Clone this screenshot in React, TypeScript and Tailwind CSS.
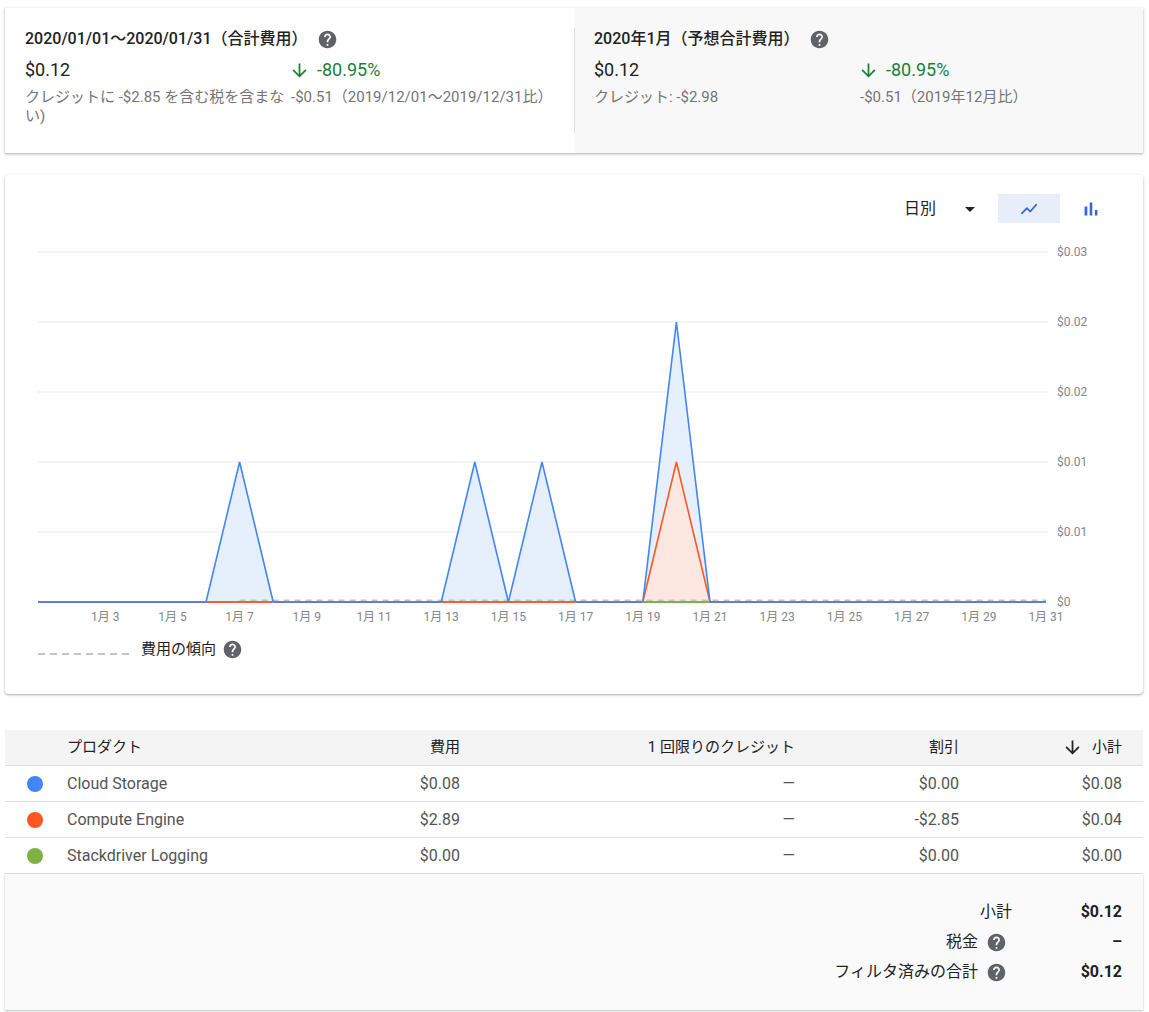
import React from "react";

const FONT = { fontFamily: "Roboto, 'Noto Sans CJK JP', sans-serif" };

function Help({ className = "" }: { className?: string }) {
  return (
    <svg viewBox="0 0 24 24" className={className} fill="#5f6368">
      <path d="M12 2C6.48 2 2 6.48 2 12s4.48 10 10 10 10-4.48 10-10S17.52 2 12 2zm1 17h-2v-2h2v2zm2.07-7.75l-.9.92C13.45 12.9 13 13.5 13 15h-2v-.5c0-1.1.45-2.1 1.17-2.83l1.24-1.26c.37-.36.59-.86.59-1.41 0-1.1-.9-2-2-2s-2 .9-2 2H8c0-2.21 1.79-4 4-4s4 1.79 4 4c0 .88-.36 1.68-.93 2.25z" />
    </svg>
  );
}

function ArrowDown({ className = "", color = "#188038" }: { className?: string; color?: string }) {
  return (
    <svg viewBox="0 0 24 24" className={className} fill={color}>
      <path d="M20 12l-1.41-1.41L13 16.17V4h-2v12.17l-5.58-5.59L4 12l8 8 8-8z" />
    </svg>
  );
}

function SummaryPanel({
  title,
  left,
  right,
  gray,
}: {
  title: string;
  left: React.ReactNode;
  right: string;
  gray?: boolean;
}) {
  return (
    <div className={`flex-1 ${gray ? "bg-[#f8f8f8] pl-[19px]" : "bg-white pl-[20px]"} pt-[20px]`}>
      <div className="flex items-center h-[22px] text-[16px] font-medium text-[#202124]">
        <span>{title}</span>
        <Help className="w-[21px] h-[21px] ml-[10px]" />
      </div>
      <div className="grid grid-cols-[266px_1fr] mt-[8px]">
        <div className="text-[18px] leading-[24px] text-[#202124]">$0.12</div>
        <div className="flex items-center text-[18px] leading-[24px] text-[#188038]">
          <ArrowDown className="w-[21px] h-[21px] -ml-[2px] mr-[7px]" />
          -80.95%
        </div>
        <div className="text-[15px] leading-[19px] text-[#757575] mt-[6px]">{left}</div>
        <div className="text-[15px] leading-[19px] text-[#757575] mt-[6px]">{right}</div>
      </div>
    </div>
  );
}

const dx = (d: number) => 33 + (d - 1) * 33.6;
const Y0 = 379;
const vy = (v: number) => Y0 - (v / 0.005) * 70;

function Chart() {
  const grid = [
    { y: 29, l: "$0.03" },
    { y: 99, l: "$0.02" },
    { y: 169, l: "$0.02" },
    { y: 239, l: "$0.01" },
    { y: 309, l: "$0.01" },
  ];
  const peaks = [
    [6, 7, 8, 0.01],
    [13, 14, 15, 0.01],
    [15, 16, 17, 0.01],
    [19, 20, 21, 0.02],
  ];
  const labels = [3, 5, 7, 9, 11, 13, 15, 17, 19, 21, 23, 25, 27, 29, 31];
  const blueBase = [
    [1, 6],
    [8, 13],
    [17, 19],
    [21, 31],
  ];
  const orangeBase = [
    [6, 8],
    [13, 17],
  ];
  return (
    <svg width="1138" height="410" className="block" style={FONT}>
      {grid.map((g, i) => (
        <g key={i}>
          <line x1={33} x2={1043} y1={g.y} y2={g.y} stroke="#ebebeb" strokeWidth={1.2} />
          <text x={1052} y={g.y + 4} fontSize={12} fill="#80868b">
            {g.l}
          </text>
        </g>
      ))}
      <text x={1052} y={Y0 + 4} fontSize={12} fill="#80868b">
        $0
      </text>
      {peaks.map((p, i) => (
        <polygon
          key={i}
          points={`${dx(p[0])},${Y0} ${dx(p[1])},${vy(p[3])} ${dx(p[2])},${Y0}`}
          fill="#e6effc"
        />
      ))}
      <polygon
        points={`${dx(19)},${Y0} ${dx(20)},${vy(0.01)} ${dx(21)},${Y0}`}
        fill="#fde8e1"
      />
      <line x1={dx(7)} x2={dx(31)} y1={Y0 - 1.5} y2={Y0 - 1.5} stroke="#c4c4c4" strokeWidth={2} strokeDasharray="6 5" />
      {blueBase.map((b, i) => (
        <line key={i} x1={dx(b[0])} x2={dx(b[1])} y1={Y0} y2={Y0} stroke="#5b7fd4" strokeWidth={2} />
      ))}
      {orangeBase.map((b, i) => (
        <line key={i} x1={dx(b[0])} x2={dx(b[1])} y1={Y0} y2={Y0} stroke="#e8672e" strokeWidth={2} />
      ))}
      <line x1={dx(19)} x2={dx(21)} y1={Y0} y2={Y0} stroke="#7cb342" strokeWidth={2} />
      <polyline
        points={`${dx(19)},${Y0} ${dx(20)},${vy(0.01)} ${dx(21)},${Y0}`}
        fill="none"
        stroke="#ff5722"
        strokeWidth={1.6}
      />
      {peaks.map((p, i) => (
        <polyline
          key={i}
          points={`${dx(p[0])},${Y0} ${dx(p[1])},${vy(p[3])} ${dx(p[2])},${Y0}`}
          fill="none"
          stroke="#4285f4"
          strokeWidth={1.6}
        />
      ))}
      {labels.map((d) => (
        <text key={d} x={dx(d)} y={398} fontSize={12} fill="#80868b" textAnchor="middle">
          1月 {d}
        </text>
      ))}
    </svg>
  );
}

const rows = [
  { c: "#4285f4", n: "Cloud Storage", cost: "$0.08", disc: "$0.00", sub: "$0.08" },
  { c: "#ff5722", n: "Compute Engine", cost: "$2.89", disc: "-$2.85", sub: "$0.04" },
  { c: "#7cb342", n: "Stackdriver Logging", cost: "$0.00", disc: "$0.00", sub: "$0.00" },
];

export default function App() {
  return (
    <div className="bg-white w-[1149px] min-h-[1012px] pl-[5px] pr-[6px] pt-[8px]" style={FONT}>
      {/* Summary card */}
      <div className="flex h-[145px] bg-white shadow-[0_1px_2px_rgba(60,64,67,0.35),0_1px_3px_1px_rgba(60,64,67,0.08)]">
        <SummaryPanel
          title="2020/01/01〜2020/01/31（合計費用）"
          left="クレジットに -$2.85 を含む税を含まない)"
          right="-$0.51（2019/12/01〜2019/12/31比）"
        />
        <div className="w-px bg-[#e0e0e0] my-[20px]" />
        <SummaryPanel title="2020年1月（予想合計費用）" left="クレジット: -$2.98" right="-$0.51（2019年12月比）" gray />
      </div>

      {/* Chart card */}
      <div className="mt-[22px] h-[519px] bg-white rounded-[4px] shadow-[0_1px_2px_rgba(60,64,67,0.35),0_1px_3px_1px_rgba(60,64,67,0.08)] pt-[19px]">
        <div className="flex items-center justify-end pr-[21px] h-[29px]">
          <div className="flex items-center text-[16px] text-[#202124] mr-[16px]">
            <span>日別</span>
            <svg viewBox="0 0 24 24" className="w-[24px] h-[24px] ml-[22px]" fill="#202124">
              <path d="M7 10l5 5 5-5z" />
            </svg>
          </div>
          <div className="w-[62px] h-[29px] bg-[#e8eef9] flex items-center justify-center">
            <svg viewBox="0 0 24 24" className="w-[20px] h-[20px]" fill="#3367d6">
              <path d="M3.5 18.49l6-6.01 4 4L22 6.92l-1.41-1.41-7.09 7.97-4-4L2 16.99z" />
            </svg>
          </div>
          <div className="w-[62px] h-[29px] flex items-center justify-center">
            <svg viewBox="0 0 24 24" className="w-[22px] h-[22px]" fill="#3367d6">
              <path d="M5 9.2h3V19H5zM10.6 5h2.8v14h-2.8zm5.6 8H19v6h-2.8z" />
            </svg>
          </div>
        </div>
        <Chart />
        <div className="flex items-center h-[22px] mt-[5px] pl-[33px]">
          <svg width="95" height="4" className="mt-[10px]">
            <line x1="0" x2="95" y1="2" y2="2" stroke="#c4c4c4" strokeWidth={2} strokeDasharray="7 5" />
          </svg>
          <span className="ml-[8px] text-[15px] text-[#202124]">費用の傾向</span>
          <Help className="w-[21px] h-[21px] ml-[6px]" />
        </div>
      </div>

      {/* Table */}
      <div className="mt-[36px]">
        <div className="flex items-center h-[36px] bg-[#f4f4f4] border-b border-[#e0e0e0] text-[#202124] text-[15px]">
          <div className="w-[62px]" />
          <div className="w-[233px]">プロダクト</div>
          <div className="w-[160px] text-right">費用</div>
          <div className="w-[335px] text-right">1 回限りのクレジット</div>
          <div className="w-[164px] text-right">割引</div>
          <div className="w-[163px] flex items-center justify-end">
            <ArrowDown className="w-[21px] h-[21px] mr-[9px]" color="#202124" />
            小計
          </div>
        </div>
        {rows.map((r) => (
          <div key={r.n} className="flex items-center h-[36px] border-b border-[#e0e0e0] text-[#545454] text-[16px]">
            <div className="w-[62px] pl-[22px]">
              <div className="w-[16px] h-[16px] rounded-full" style={{ backgroundColor: r.c }} />
            </div>
            <div className="w-[233px]">{r.n}</div>
            <div className="w-[160px] text-right">{r.cost}</div>
            <div className="w-[335px] text-right">—</div>
            <div className="w-[164px] text-right">{r.disc}</div>
            <div className="w-[163px] text-right">{r.sub}</div>
          </div>
        ))}
        <div className="bg-[#fafafa] h-[136px] pt-[23px] shadow-[0_1px_2px_rgba(60,64,67,0.35)] text-[#202124] text-[16px]">
          {[
            { l: "小計", h: false, v: "$0.12" },
            { l: "税金", h: true, v: "–" },
            { l: "フィルタ済みの合計", h: true, v: "$0.12" },
          ].map((s) => (
            <div key={s.l} className="flex items-center justify-end h-[30px] pr-[21px]">
              <div className="flex items-center">
                <span>{s.l}</span>
                {s.h && <Help className="w-[21px] h-[21px] ml-[8px] mr-[5px]" />}
              </div>
              <div className="w-[110px] text-right font-bold">{s.v}</div>
            </div>
          ))}
        </div>
      </div>
    </div>
  );
}
